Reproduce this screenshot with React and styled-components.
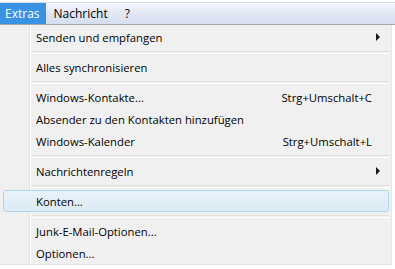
import React from 'react';
import styled, { createGlobalStyle } from 'styled-components';

const Global = createGlobalStyle`
  html, body { margin: 0; padding: 0; background: #ffffff; }
  body { font-family: "Open Sans", "Noto Sans", "Liberation Sans", sans-serif; font-size: 11.3px; color: #000; }
`;

const Page = styled.div`
  width: 395px;
  height: 269px;
  overflow: hidden;
  background: #ffffff;
`;

const MenuBar = styled.div`
  margin-top: 2px;
  height: 21px;
  display: flex;
  align-items: stretch;
  border-top: 1px solid #d9dde6;
  border-bottom: 1px solid #a3a6ad;
  background: linear-gradient(#f7f9fd, #e3e8f4 45%, #d6def0);
  font-size: 12px;
`;

const BarItem = styled.div`
  display: flex;
  align-items: center;
  padding: 0 ${p => p.$right}px 0 ${p => p.$left}px;
  color: ${p => (p.$active ? '#ffffff' : '#000000')};
  background: ${p => (p.$active ? '#3a92e3' : 'transparent')};
`;

const Menu = styled.div`
  width: 392px;
  height: 240px;
  box-sizing: border-box;
  padding: 1px 2px 0 3px;
  background: #f0f0f0;
  border-right: 1px solid #e6e6e6;
  border-bottom: 1px solid #e2e2e2;
  background-image: linear-gradient(90deg, transparent 29px, #e2e3e3 29px, #e2e3e3 30px, #ffffff 30px, #ffffff 31px, transparent 31px);
`;

const Item = styled.div`
  height: 22px;
  box-sizing: border-box;
  display: flex;
  align-items: center;
  padding: 0 8px 0 32px;
  border: 1px solid ${p => (p.$hover ? '#b0d6ea' : 'transparent')};
  border-radius: 3px;
  background: ${p => (p.$hover ? 'linear-gradient(#e9f2f9, #dceaf4)' : 'transparent')};
`;

const Label = styled.span`
  flex: 1;
  white-space: nowrap;
`;

const Shortcut = styled.span`
  white-space: nowrap;
  margin-right: 8px;
`;

const Arrow = styled.span`
  width: 0;
  height: 0;
  border-top: 4px solid transparent;
  border-bottom: 4px solid transparent;
  border-left: 4px solid #1a1a1a;
`;

const Separator = styled.div`
  height: 8px;
  display: flex;
  align-items: center;
  padding-left: 29px;
  &::after {
    content: '';
    flex: 1;
    height: 1px;
    border-top: 1px solid #e0e0e0;
    border-bottom: 1px solid #ffffff;
  }
`;

const entries = [
  { label: 'Senden und empfangen', sub: true },
  'sep',
  { label: 'Alles synchronisieren' },
  'sep',
  { label: 'Windows-Kontakte...', key: 'Strg+Umschalt+C' },
  { label: 'Absender zu den Kontakten hinzufügen' },
  { label: 'Windows-Kalender', key: 'Strg+Umschalt+L' },
  'sep',
  { label: 'Nachrichtenregeln', sub: true },
  'sep',
  { label: 'Konten...', hover: true },
  'sep',
  { label: 'Junk-E-Mail-Optionen...' },
  { label: 'Optionen...' },
];

export default function App() {
  return (
    <Page>
      <Global />
      <MenuBar>
        <BarItem $active $left={5} $right={6}>Extras</BarItem>
        <BarItem $left={8} $right={12}>Nachricht</BarItem>
        <BarItem $left={5} $right={6}>?</BarItem>
      </MenuBar>
      <Menu>
        {entries.map((e, i) =>
          e === 'sep' ? (
            <Separator key={i} />
          ) : (
            <Item key={i} $hover={e.hover}>
              <Label>{e.label}</Label>
              {e.key && <Shortcut>{e.key}</Shortcut>}
              {e.sub && <Arrow />}
            </Item>
          )
        )}
      </Menu>
    </Page>
  );
}
